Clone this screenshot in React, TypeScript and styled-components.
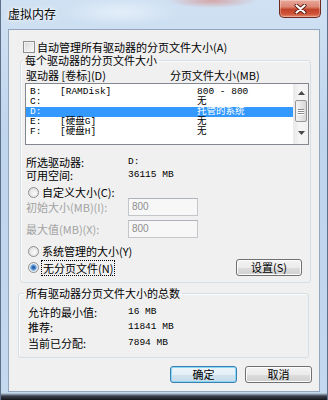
import React from "react";
import styled, { createGlobalStyle } from "styled-components";

const CJK = `"Noto Sans CJK SC", "Noto Sans", sans-serif`;
const MONO = `"Liberation Mono", "Noto Sans CJK SC", monospace`;

const GlobalStyle = createGlobalStyle`
  html, body { margin: 0; padding: 0; width: 328px; height: 400px; overflow: hidden; }
  body { font-family: ${CJK}; background: #bfd4ec; }
  * { box-sizing: border-box; }
`;

const Window = styled.div`
  width: 328px;
  height: 400px;
  display: flex;
  flex-direction: column;
  padding-bottom: 8px;
  background:
    linear-gradient(to bottom, transparent 393px, #9aa6b6 394px, #3b3f4c 396px, #15161c 400px),
    radial-gradient(ellipse 45px 7px at 212px 1px, rgba(214, 120, 110, 0.55), transparent),
    radial-gradient(ellipse 60px 14px at 120px 12px, rgba(236, 244, 252, 0.7), transparent),
    linear-gradient(180deg, #d0e1f3 0%, #bfd5ed 35%, #c4d8ee 100%);
  box-shadow: inset 1px 0 0 #5d708a, inset -1px 0 0 #5d708a;
`;

const TitleBar = styled.div`
  height: 29px;
  flex: none;
  display: flex;
  align-items: flex-start;
  padding: 0 7px 0 8px;
`;

const Title = styled.span`
  margin-top: 7px;
  font: 12px/14px ${CJK};
  color: #000;
  text-shadow: 0 0 6px #fff, 0 0 3px #fff;
`;

const CloseButton = styled.div`
  margin-left: auto;
  width: 42px;
  height: 18px;
  border: 1px solid #6d2a21;
  border-top: none;
  border-radius: 0 0 5px 5px;
  background: linear-gradient(#eaa99b 0%, #dc8672 40%, #c2432b 56%, #cf5438 82%, #e48c70 100%);
  box-shadow: inset 0 0 0 1px rgba(255, 255, 255, 0.3);
  display: flex;
  align-items: center;
  justify-content: center;
`;

const Client = styled.div`
  flex: 1;
  margin: 0 8px;
  background: #f0f0f0;
  border: 1px solid #94a6bd;
  display: flex;
  flex-direction: column;
  font: 11px/12px ${CJK};
  color: #000;
`;

const CheckRow = styled.div`
  display: flex;
  align-items: center;
  gap: 2px;
  height: 12px;
  margin: 11px 0 0 14px;
`;

const CheckBox = styled.span`
  width: 12px;
  height: 12px;
  flex: none;
  border: 1px solid #8f8f8f;
  background: linear-gradient(135deg, #d6d6d6, #fbfbfb);
  box-shadow: inset 0 0 0 1px #f2f2f2;
`;

const GroupBox = styled.fieldset<{ $left: number; $right: number; $top: number }>`
  margin: ${(p) => p.$top}px ${(p) => p.$right}px 0 ${(p) => p.$left}px;
  padding: 0 0 6px 0;
  min-width: 0;
  border: 1px solid #d5dfe5;
  border-radius: 3px;
  box-shadow: inset 1px 1px 0 #fbfbfb;
`;

const Legend = styled.legend<{ $offset: number }>`
  margin-left: ${(p) => p.$offset}px;
  padding: 0 2px;
  font: 11px/13px ${CJK};
  color: #000;
`;

const ColumnHeader = styled.div`
  display: grid;
  grid-template-columns: 144px 1fr;
  height: 12px;
  margin-top: 2px;
  padding-left: 5px;
  line-height: 12px;
`;

const ListBox = styled.div`
  margin: 2px 0 0 4px;
  width: 284px;
  height: 62px;
  border: 1px solid #828790;
  background: #fff;
  display: flex;
`;

const Rows = styled.div`
  flex: 1;
  padding-top: 3px;
`;

const Row = styled.div<{ $selected?: boolean }>`
  display: grid;
  grid-template-columns: 30px 137px 1fr;
  height: 10px;
  padding-left: 4px;
  font: 9.5px/10px ${MONO};
  white-space: nowrap;
  background: ${(p) => (p.$selected ? "#3399ff" : "transparent")};
  color: ${(p) => (p.$selected ? "#fff" : "#000")};
`;

const ScrollBar = styled.div`
  width: 15px;
  flex: none;
  display: flex;
  flex-direction: column;
  background: linear-gradient(90deg, #e9e9e9, #f5f5f5 40%, #f1f1f1);
  border-left: 1px solid #ececec;
`;

const ScrollArrow = styled.div<{ $down?: boolean }>`
  height: 16px;
  display: flex;
  align-items: center;
  justify-content: center;
  padding-bottom: ${(p) => (p.$down ? 6 : 0)}px;
  padding-top: ${(p) => (p.$down ? 0 : 1)}px;
`;

const ScrollTrack = styled.div`
  flex: 1;
  display: flex;
  flex-direction: column;
`;

const ScrollThumb = styled.div`
  height: 22px;
  margin: 0 1px;
  border: 1px solid #979797;
  border-radius: 2px;
  background: linear-gradient(90deg, #f4f4f4, #e6e6e6 50%, #d6d6d6);
  display: flex;
  flex-direction: column;
  align-items: center;
  justify-content: center;
  gap: 1px;
`;

const Grip = styled.span`
  width: 6px;
  height: 1px;
  background: #8a8a8a;
  box-shadow: 0 1px 0 #fff;
`;

const InfoGrid = styled.div<{ $indent: number; $col: number; $row: number; $top: number }>`
  display: grid;
  grid-template-columns: ${(p) => p.$col}px 1fr;
  grid-auto-rows: ${(p) => p.$row}px;
  align-items: center;
  padding-left: ${(p) => p.$indent}px;
  margin-top: ${(p) => p.$top}px;
`;

const Value = styled.span`
  font: 9.5px/10px ${MONO};
  color: #000;
`;

const RadioRow = styled.div<{ $top: number; $height?: number }>`
  display: flex;
  align-items: center;
  gap: 3px;
  height: ${(p) => p.$height ?? 12}px;
  padding-left: 7px;
  margin-top: ${(p) => p.$top}px;
`;

const Radio = styled.span<{ $checked?: boolean }>`
  width: 11px;
  height: 11px;
  flex: none;
  border-radius: 50%;
  border: 1px solid #8e8f8f;
  background: ${(p) =>
    p.$checked
      ? "radial-gradient(circle at 50% 50%, #1c4a86 0, #3c78c0 1.5px, #8ab9e8 3px, #dfe6ee 3.6px, #f6f6f6 5px)"
      : "radial-gradient(circle at 60% 60%, #fbfbfb, #d6d6d6)"};
`;

const FocusText = styled.span`
  outline: 1px dotted #000;
  outline-offset: 0;
  padding: 0 1px;
  line-height: 14px;
`;

const FieldRow = styled.div<{ $top: number }>`
  display: grid;
  grid-template-columns: 102px 70px;
  align-items: center;
  height: 18px;
  padding-left: 5px;
  margin-top: ${(p) => p.$top}px;
  color: #a3a3a3;
`;

const TextInput = styled.div`
  height: 18px;
  border: 1px solid #c3c7cc;
  border-top-color: #aeb3b9;
  background: #f7f7f7;
  color: #8f8f8f;
  font: 10px/16px "Liberation Sans", sans-serif;
  padding-left: 3px;
`;

const Button = styled.button<{ $width: number; $primary?: boolean }>`
  width: ${(p) => p.$width}px;
  height: 17px;
  flex: none;
  padding: 0;
  border: 1px solid ${(p) => (p.$primary ? "#3c7fb1" : "#707070")};
  border-radius: 3px;
  background: ${(p) =>
    p.$primary
      ? "linear-gradient(#eef5fa 0%, #e3eef6 50%, #d3e3ef 51%, #c7dbea 100%)"
      : "linear-gradient(#f3f3f3 0%, #ebebeb 50%, #dddddd 51%, #cfcfcf 100%)"};
  box-shadow: ${(p) => (p.$primary ? "inset 0 0 0 1px #86d6f4" : "inset 0 0 0 1px #fcfcfc")};
  font: 11px/13px ${CJK};
  color: #000;
`;

const SetButton = styled(Button)`
  margin: 0 8px 0 auto;
`;

const ButtonBar = styled.div`
  display: flex;
  justify-content: flex-end;
  gap: 8px;
  margin-top: 8px;
  padding-right: 7px;
`;

const CloseIcon = () => (
  <svg width="13" height="10" viewBox="0 0 13 10">
    <path d="M2.5 1.5 L10.5 8.5 M10.5 1.5 L2.5 8.5" stroke="#5a1a12" strokeWidth="4" strokeLinecap="round" />
    <path d="M2.5 1.5 L10.5 8.5 M10.5 1.5 L2.5 8.5" stroke="#fff" strokeWidth="2.2" strokeLinecap="round" />
  </svg>
);

const Arrow = ({ down }: { down?: boolean }) => (
  <svg width="7" height="4" viewBox="0 0 7 4">
    <path d={down ? "M0 0 H7 L3.5 4 Z" : "M0 4 H7 L3.5 0 Z"} fill="#4a4a4a" />
  </svg>
);

const drives = [
  { d: "B:", label: "[RAMDisk]", size: "800 - 800" },
  { d: "C:", label: "", size: "无" },
  { d: "D:", label: "", size: "托管的系统", selected: true },
  { d: "E:", label: "[硬盘G]", size: "无" },
  { d: "F:", label: "[硬盘H]", size: "无" },
];

export default function App() {
  return (
    <>
      <GlobalStyle />
      <Window>
        <TitleBar>
          <Title>虚拟内存</Title>
          <CloseButton>
            <CloseIcon />
          </CloseButton>
        </TitleBar>
        <Client>
          <CheckRow>
            <CheckBox />
            <span>自动管理所有驱动器的分页文件大小(A)</span>
          </CheckRow>

          <GroupBox $left={11} $right={8} $top={1}>
            <Legend $offset={2}>每个驱动器的分页文件大小</Legend>
            <ColumnHeader>
              <span>驱动器 [卷标](D)</span>
              <span>分页文件大小(MB)</span>
            </ColumnHeader>
            <ListBox>
              <Rows>
                {drives.map((r) => (
                  <Row key={r.d} $selected={r.selected}>
                    <span>{r.d}</span>
                    <span>{r.label}</span>
                    <span>{r.size}</span>
                  </Row>
                ))}
              </Rows>
              <ScrollBar>
                <ScrollArrow>
                  <Arrow />
                </ScrollArrow>
                <ScrollTrack>
                  <ScrollThumb>
                    <Grip />
                    <Grip />
                    <Grip />
                  </ScrollThumb>
                </ScrollTrack>
                <ScrollArrow $down>
                  <Arrow down />
                </ScrollArrow>
              </ScrollBar>
            </ListBox>

            <InfoGrid $indent={5} $col={102} $row={12.5} $top={11}>
              <span>所选驱动器:</span>
              <Value>D:</Value>
              <span>可用空间:</span>
              <Value>36115 MB</Value>
            </InfoGrid>

            <RadioRow $top={5}>
              <Radio />
              <span>自定义大小(C):</span>
            </RadioRow>
            <FieldRow $top={0}>
              <span>初始大小(MB)(I):</span>
              <TextInput>800</TextInput>
            </FieldRow>
            <FieldRow $top={4}>
              <span>最大值(MB)(X):</span>
              <TextInput>800</TextInput>
            </FieldRow>
            <RadioRow $top={7}>
              <Radio />
              <span>系统管理的大小(Y)</span>
            </RadioRow>
            <RadioRow $top={2} $height={17}>
              <Radio $checked />
              <FocusText>无分页文件(N)</FocusText>
              <SetButton $width={66}>设置(S)</SetButton>
            </RadioRow>
          </GroupBox>

          <GroupBox $left={9} $right={10} $top={4}>
            <Legend $offset={5}>所有驱动器分页文件大小的总数</Legend>
            <InfoGrid $indent={9} $col={100} $row={15.5} $top={4}>
              <span>允许的最小值:</span>
              <Value>16 MB</Value>
              <span>推荐:</span>
              <Value>11841 MB</Value>
              <span>当前已分配:</span>
              <Value>7894 MB</Value>
            </InfoGrid>
          </GroupBox>

          <ButtonBar>
            <Button $width={67} $primary>
              确定
            </Button>
            <Button $width={67}>取消</Button>
          </ButtonBar>
        </Client>
      </Window>
    </>
  );
}
